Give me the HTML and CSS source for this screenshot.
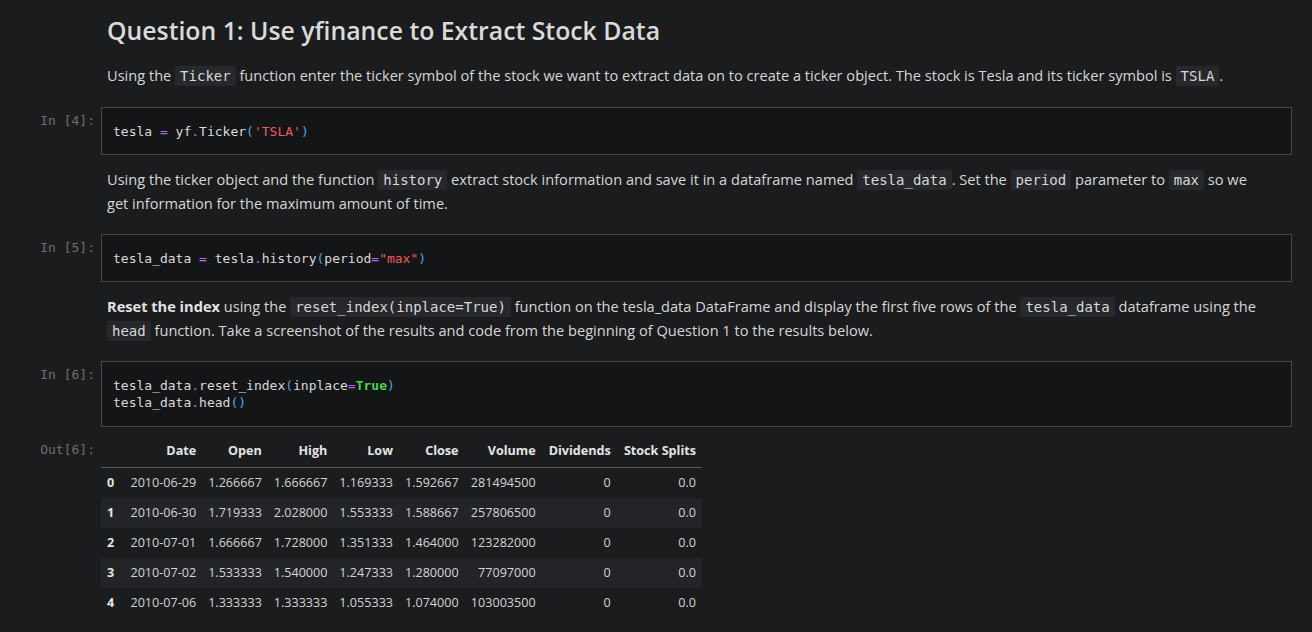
FILE: index.html
```html
<!DOCTYPE html>
<html lang="en">
<head>
<meta charset="utf-8">
<title>Question 1</title>
<link rel="stylesheet" href="styles.css">
</head>
<body>
<main class="notebook">
  <div class="cell md-cell">
    <div class="prompt"></div>
    <div class="md">
      <h2 class="title">Question 1: Use yfinance to Extract Stock Data</h2>
      <p class="first">Using the <code>Ticker</code> function enter the ticker symbol of the stock we want to extract data on to create a ticker object. The stock is Tesla and its ticker symbol is <code>TSLA</code>.</p>
    </div>
  </div>

  <div class="cell code-cell">
    <div class="prompt">In&nbsp;[4]:</div>
    <pre class="code">tesla <span class="op">=</span> yf<span class="op">.</span>Ticker<span class="br">(</span><span class="str">'TSLA'</span><span class="br">)</span></pre>
  </div>

  <div class="cell md-cell">
    <div class="prompt"></div>
    <div class="md">
      <p><span>Using the ticker object and the function</span> <code>history</code> <span>extract stock information and save it in a dataframe named</span> <code>tesla_data</code><span>. Set the</span> <code>period</code> <span>parameter to</span> <code>max</code> <span>so we</span> <span>get information for the maximum amount of time.</span></p>
    </div>
  </div>

  <div class="cell code-cell">
    <div class="prompt">In&nbsp;[5]:</div>
    <pre class="code">tesla_data <span class="op">=</span> tesla<span class="op">.</span>history<span class="br">(</span>period<span class="op">=</span><span class="str">"max"</span><span class="br">)</span></pre>
  </div>

  <div class="cell md-cell">
    <div class="prompt"></div>
    <div class="md">
      <p><strong>Reset the index</strong> <span>using the</span> <code>reset_index(inplace=True)</code> <span>function on the tesla_data DataFrame and display the first five rows of the</span> <code>tesla_data</code> <span>dataframe using the</span> <code>head</code> <span>function. Take a screenshot of the results and code from the beginning of Question 1 to the results below.</span></p>
    </div>
  </div>

  <div class="cell code-cell">
    <div class="prompt">In&nbsp;[6]:</div>
    <pre class="code tall">tesla_data<span class="op">.</span>reset_index<span class="br">(</span>inplace<span class="op">=</span><span class="kw">True</span><span class="br">)</span>
tesla_data<span class="op">.</span>head<span class="br">()</span></pre>
  </div>

  <div class="cell out-cell">
    <div class="prompt out-prompt">Out[6]:</div>
    <div class="output">
      <table class="df">
        <thead>
          <tr>
            <th class="c-idx"></th>
            <th class="c-date">Date</th>
            <th class="c-num">Open</th>
            <th class="c-num">High</th>
            <th class="c-num">Low</th>
            <th class="c-num">Close</th>
            <th class="c-vol">Volume</th>
            <th class="c-div">Dividends</th>
            <th class="c-split">Stock Splits</th>
          </tr>
        </thead>
        <tbody>
          <tr><th>0</th><td>2010-06-29</td><td>1.266667</td><td>1.666667</td><td>1.169333</td><td>1.592667</td><td>281494500</td><td>0</td><td>0.0</td></tr>
          <tr><th>1</th><td>2010-06-30</td><td>1.719333</td><td>2.028000</td><td>1.553333</td><td>1.588667</td><td>257806500</td><td>0</td><td>0.0</td></tr>
          <tr><th>2</th><td>2010-07-01</td><td>1.666667</td><td>1.728000</td><td>1.351333</td><td>1.464000</td><td>123282000</td><td>0</td><td>0.0</td></tr>
          <tr><th>3</th><td>2010-07-02</td><td>1.533333</td><td>1.540000</td><td>1.247333</td><td>1.280000</td><td>77097000</td><td>0</td><td>0.0</td></tr>
          <tr><th>4</th><td>2010-07-06</td><td>1.333333</td><td>1.333333</td><td>1.055333</td><td>1.074000</td><td>103003500</td><td>0</td><td>0.0</td></tr>
        </tbody>
      </table>
    </div>
  </div>
</main>
</body>
</html>
```

FILE: styles.css
```css
html, body {
  margin: 0;
  padding: 0;
  background: #1b1c1e;
}

body {
  width: 1312px;
  height: 632px;
  overflow: hidden;
  color: #d6d6d6;
  font-family: "Open Sans", "Noto Sans", sans-serif;
}

.notebook {
  padding: 0 20px 0 0;
}

.cell {
  display: grid;
  grid-template-columns: 101px 1fr;
}

.prompt {
  font-family: "DejaVu Sans Mono", monospace;
  font-size: 13px;
  line-height: 17px;
  color: #6f6f6f;
  text-align: right;
  padding-right: 6px;
  white-space: nowrap;
}

.code-cell .prompt {
  padding-top: 5px;
}

/* markdown */
.md {
  padding: 12px 24px 19px 6px;
  font-size: 14.6px;
  line-height: 24px;
  color: #d6d6d6;
}

.md p {
  margin: 0;
}

.title {
  margin: 3px 0 18px 0;
  font-size: 24.8px;
  line-height: 30px;
  font-weight: 600;
  color: #dadada;
}

.md p.first {
  margin-bottom: 1px;
}

.md strong {
  font-weight: 700;
  color: #e2e2e2;
}

.md code {
  display: inline-block;
  font-family: "DejaVu Sans Mono", monospace;
  font-size: 14px;
  line-height: 20px;
  background: #27282b;
  color: #d8d8d8;
  padding: 0 5px;
  border-radius: 2px;
}

/* code */
.code {
  margin: 0;
  background: #141517;
  border: 1px solid #464646;
  padding: 14.5px 11px;
  font-family: "DejaVu Sans Mono", monospace;
  font-size: 13px;
  line-height: 17px;
  color: #dadada;
}

.code.tall {
  padding-bottom: 15.5px;
}

.op { color: #b468f0; }
.br { color: #4ea6ee; }
.str { color: #f05a5a; }
.kw { color: #4fd24f; font-weight: bold; }

/* output */
.out-cell .out-prompt {
  padding-top: 14px;
}

.output {
  padding-top: 8px;
}

.df {
  border-collapse: collapse;
  table-layout: fixed;
  width: 601px;
  font-size: 12.6px;
  color: #d4d4d4;
}

.df th,
.df td {
  padding: 0 6px;
  text-align: right;
  white-space: nowrap;
  vertical-align: middle;
}

.df thead th {
  height: 30px;
  padding-bottom: 2px;
  font-weight: 700;
  color: #e4e4e4;
  border-bottom: 1px solid #5a5a5a;
}

.df tbody tr {
  height: 30px;
}

.df tbody th {
  font-weight: 700;
  color: #e4e4e4;
}

.df tbody tr:nth-child(even) {
  background: #232427;
}

.c-idx { width: 7px; }
.c-date { width: 70px; }
.c-num { width: 53.5px; }
.c-vol { width: 65px; }
.c-div { width: 63px; }
.c-split { width: 73px; }
```
